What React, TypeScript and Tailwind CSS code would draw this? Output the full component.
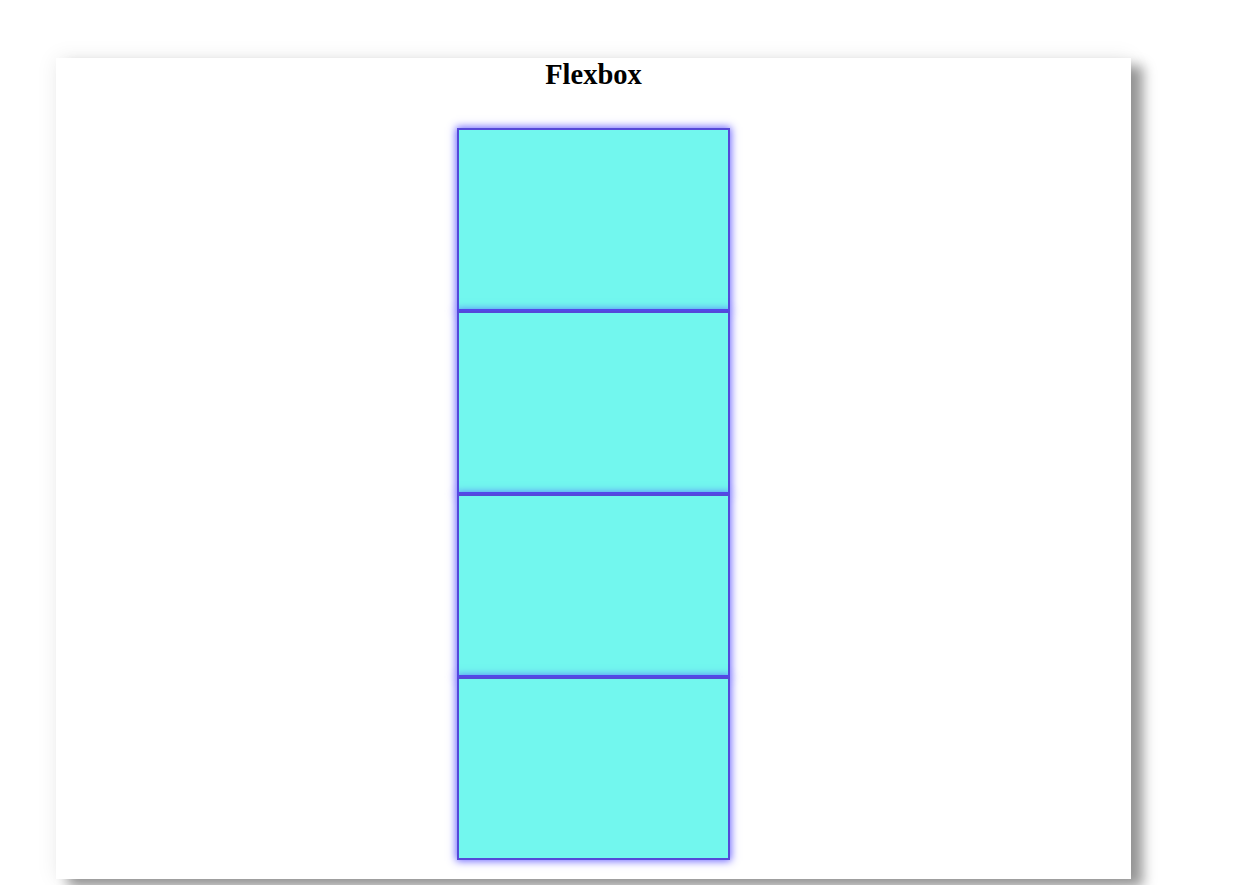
import React from "react";

export default function App() {
  const boxes = [0, 1, 2, 3];
  return (
    <div className="min-h-[885px] w-[1240px] bg-white pt-[58px] pl-[56px]">
      <div className="flex h-[821px] w-[1075px] flex-col items-center bg-white shadow-[12px_8px_12px_rgba(0,0,0,0.4),0_0_20px_rgba(0,0,0,0.08)]">
        <h1 className="m-0 pt-[1px] text-[28.5px] font-bold leading-[32px] text-black [font-family:'Liberation_Serif',serif]">
          Flexbox
        </h1>
        <div className="mt-[37px] flex flex-col">
          {boxes.map((b) => (
            <div
              key={b}
              className="box-border h-[183px] w-[273px] border-2 border-[#5549d8] bg-[#72f7ee] shadow-[0_0_8px_1px_rgba(80,70,255,0.85)]"
            />
          ))}
        </div>
      </div>
    </div>
  );
}
